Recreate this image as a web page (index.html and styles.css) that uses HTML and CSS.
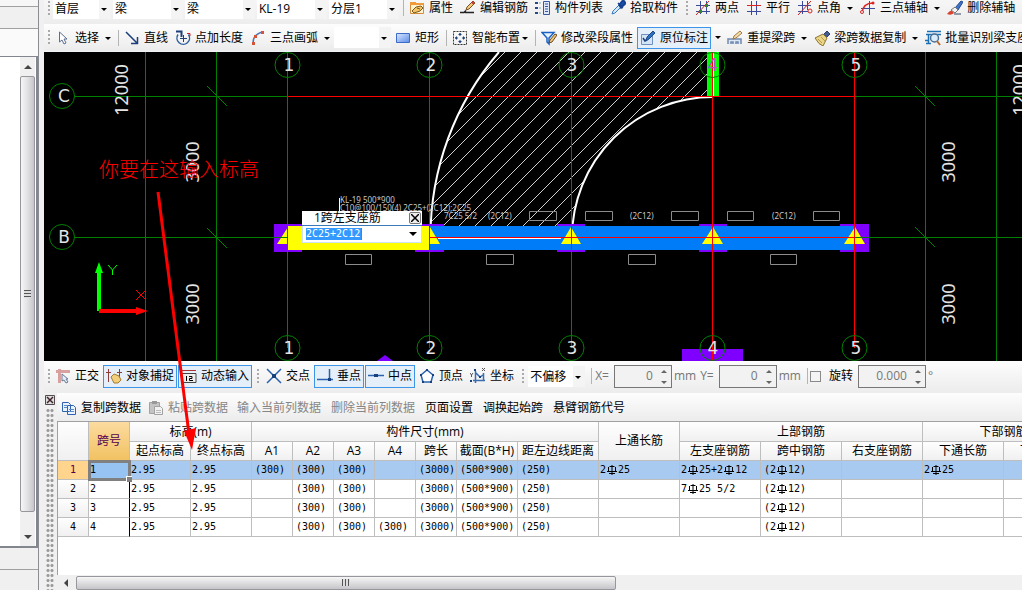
FILE: index.html
```html
<!DOCTYPE html>
<html lang="zh-CN">
<head>
    <meta charset="UTF-8">
    <meta name="viewport" content="width=device-width, initial-scale=1.0">
    <title>梁原位标注</title>
    <link rel="stylesheet" href="styles.css">
</head>
<body>

    <svg class="defs" width="0" height="0">
        <symbol id="rebar" viewBox="0 0 12 10">
            <path d="M3.500 1.500h5M3.500 6.500h5M2.500 2v4M9.500 2v4M6 0v10M1 6.500h10M3 8.500h6" fill="none" stroke="#000"/>
        </symbol>
    </svg>

    <div class="app">

        <aside class="sidebar">
            <div class="side-strip"></div>
            <div class="side-tab"></div>
            <div class="side-search"></div>
            <div class="side-tree">
                <div class="vscroll">
                    <span class="arrow-up"></span>
                    <div class="vthumb"><i class="grip-v"></i></div>
                    <span class="arrow-down"></span>
                </div>
            </div>
            <div class="side-tab"></div>
            <div class="side-rest"></div>
        </aside>

        <main class="main">

            <div class="toolbar toolbar-top">
                <span class="handle"></span>
                <div class="combos">
                    <label class="combo combo-first"><select aria-label="楼层"><option>首层</option></select></label>
                    <label class="combo"><select aria-label="构件类型"><option>梁</option></select></label>
                    <label class="combo"><select aria-label="构件"><option>梁</option></select></label>
                    <label class="combo"><select aria-label="构件名称"><option>KL-19</option></select></label>
                    <label class="combo"><select aria-label="分层"><option>分层1</option></select></label>
                </div>
                <span class="sep"></span>
                <button class="tool">
                    <svg class="icon" viewBox="0 0 16 16"><path d="M1.500 2.500h5l1 1h7v10h-13z" fill="#fff3cf" stroke="#d58b3c"/><path d="M1 2h6v3H1zM7 3h8v2H7z" fill="#f09a3a"/><path d="M3 11l4-4 5-1 2 2-3 3-3 1-3 1z" fill="#f3c463" stroke="#7a5a22"/><path d="M8 8l3 1" stroke="#7a5a22"/></svg>
                    属性
                </button>
                <button class="tool">
                    <svg class="icon" viewBox="0 0 16 16"><path d="M0 12.500h4l2-2M5 12.500h9" fill="none" stroke="#222" stroke-width="1.500"/><path d="M6 10l1-3 6-6 2 2-6 6z" fill="#f2c879" stroke="#7b5427"/><path d="M12 2l2 2" stroke="#c33" stroke-width="2"/></svg>
                    编辑钢筋
                </button>
                <button class="tool">
                    <svg class="icon" viewBox="0 0 16 16"><path d="M0 3h3M0 8h3M0 13h3" stroke="#234a8c" stroke-width="2"/><path d="M4 3h2M4 8h2M4 13h2" stroke="#8aa" /><path d="M8.500 1.500h6v13h-6z" fill="#dfe9fa" stroke="#345a9c"/><path d="M10 4h3M10 6.500h3M10 9h3M10 11.500h3" stroke="#345a9c"/></svg>
                    构件列表
                </button>
                <button class="tool">
                    <svg class="icon" viewBox="0 0 16 16"><path d="M2 14l1-3 6-6 2 2-6 6z" fill="#cfe8fb" stroke="#3b7cc0"/><path d="M8 3l5 5M9 5l3-4q2-1 3 1t-1 3l-3 3z" fill="#1a4cab" stroke="#173f8c" stroke-width="1.500"/></svg>
                    拾取构件
                </button>
                <span class="handle handle-mid"></span>
                <button class="tool">
                    <svg class="icon" viewBox="0 0 16 16"><path d="M5.500 1v13M11.500 1v13M1 5.500h14M1 11.500h14" stroke="#3b4a9c"/><path d="M1 15L14 1" stroke="#c22"/><path d="M4 10h3v3H4zM10 4h3v3h-3z" fill="#2a8a2a"/></svg>
                    两点
                </button>
                <button class="tool">
                    <svg class="icon" viewBox="0 0 16 16"><path d="M5.500 1v14M10.500 1v14M1 11.500h14" stroke="#3b4a9c" fill="none"/><path d="M1 5.500h14" stroke="#d22"/></svg>
                    平行
                </button>
                <button class="tool tool-drop">
                    <svg class="icon" viewBox="0 0 16 16"><path d="M5.500 1v13M10.500 1v9M1 5.500h13M1 11.500h10" stroke="#3b4a9c"/><path d="M1 15L14 1" stroke="#c22"/><circle cx="13" cy="11" r="2" fill="none" stroke="#d22"/></svg>
                    点角<i class="caret"></i>
                </button>
                <button class="tool tool-drop">
                    <svg class="icon" viewBox="0 0 16 16"><path d="M9.500 1v14M1 8.500h14" stroke="#3b4a9c"/><path d="M2 13q1-10 11-10" fill="none" stroke="#d22" stroke-width="1.500"/><circle cx="13" cy="3" r="1.500" fill="#d22"/><circle cx="2" cy="12" r="1.500" fill="#fff" stroke="#d22"/></svg>
                    三点辅轴<i class="caret"></i>
                </button>
                <button class="tool">
                    <svg class="icon" viewBox="0 0 16 16"><path d="M8 8l6-7 2 1-5 8z" fill="#3f74c8" stroke="#234a8c"/><path d="M4 10l4-3 3 3-3 3z" fill="#f4f4f4" stroke="#777"/><path d="M0 14q3-4 5-3l2 2q-3 3-7 1z" fill="#d9442f"/><path d="M7 14h7" stroke="#346"/></svg>
                    删除辅轴
                </button>
            </div>

            <div class="toolbar toolbar-draw">
                <span class="handle"></span>
                <button class="tool tool-drop">
                    <svg class="icon" viewBox="0 0 16 16"><path d="M4.500 2v10l2.500-2 2 4 2-1-2-4h3z" fill="#fff" stroke="#5b6f8f"/></svg>
                    选择<i class="caret"></i>
                </button>
                <span class="sep"></span>
                <button class="tool">
                    <svg class="icon" viewBox="0 0 16 16"><path d="M2 2l11 11M13.500 7v6.500H7" fill="none" stroke="#1d3f7c" stroke-width="1.500"/></svg>
                    直线
                </button>
                <button class="tool">
                    <svg class="icon" viewBox="0 0 16 16"><path d="M3 4.500a6.300 6.300 0 1 0 10.500 0" fill="none" stroke="#2e5f9e" stroke-width="1.500"/><path d="M1 1.500h5.500V7" fill="none" stroke="#1d3f7c" stroke-width="2"/><path d="M8.500 5v7M5 8.500h7" stroke="#1d3f7c"/><path d="M12 3.500h3V6" stroke="#d22" fill="none"/></svg>
                    点加长度
                </button>
                <button class="tool tool-drop">
                    <svg class="icon" viewBox="0 0 16 16"><path d="M3 13Q3 4 13 2" fill="none" stroke="#5475b5" stroke-width="1.500"/><path d="M2 12h3v3H2zM4 5h3v3H4zM11 1h3v3h-3z" fill="#d2553a"/></svg>
                    三点画弧<i class="caret"></i>
                </button>
                <label class="combo combo-wide"><select aria-label="画弧方式"><option></option></select></label>
                <button class="tool">
                    <svg class="icon" viewBox="0 0 16 16"><defs><linearGradient id="rc" x2="1" y2="1"><stop stop-color="#dce8ff"/><stop offset="1" stop-color="#5b8cea"/></linearGradient></defs><path d="M1.500 3.500h13v9h-13z" fill="url(#rc)" stroke="#3c6cc8"/></svg>
                    矩形
                </button>
                <span class="sep"></span>
                <button class="tool tool-drop tight">
                    <svg class="icon" viewBox="0 0 16 16"><path d="M1.500 1.500h13v13h-13z" fill="none" stroke="#333" stroke-dasharray="2 1"/><path d="M8 3v3M8 10v3M3 8h3M10 8h3" stroke="#1d3f7c"/><path d="M6 5l2-2 2 2zM6 11l2 2 2-2zM5 6L3 8l2 2zM11 6l2 2-2 2z" fill="#1d3f7c"/></svg>
                    智能布置<i class="caret"></i>
                </button>
                <span class="sep"></span>
                <button class="tool">
                    <svg class="icon" viewBox="0 0 16 16"><path d="M1 2.500h12L8 8v6l-2-2V8z" fill="#e4f2ff" stroke="#1b62c4" stroke-width="1.500"/><path d="M8 13l1-3 5-6 2 1-5 7z" fill="#f2c879" stroke="#6b4a22"/></svg>
                    修改梁段属性
                </button>
                <button class="tool active">
                    <svg class="icon" viewBox="0 0 16 16"><path d="M1.500 4.500h11v10h-11z" fill="#d5e5f8" stroke="#6f8fbd"/><path d="M3 8l2 3 2-2" fill="none" stroke="#1d3f7c" stroke-width="1.500"/><path d="M6 11l1-4 6-6 2 2-6 6z" fill="#2f6fc0" stroke="#1c4a88"/></svg>
                    原位标注
                </button>
                <span class="split"><i class="caret"></i></span>
                <button class="tool tool-drop">
                    <svg class="icon" viewBox="0 0 16 16"><path d="M1 14V9h13v5M4 14v-2h2v2M9 14v-2h2v2" fill="#dce6f5" stroke="#7189ad" stroke-width="1.500"/><path d="M6 9l1-3 6-5 2 2-6 5z" fill="#f4dca8" stroke="#a37a42"/></svg>
                    重提梁跨<i class="caret"></i>
                </button>
                <button class="tool tool-drop">
                    <svg class="icon" viewBox="0 0 16 16"><path d="M9 5l4-4 3 3-4 4z" fill="#445a90" stroke="#2d3f6c"/><path d="M1 8l8-4 4 4-4 8q-4-1-8-8z" fill="#ead588" stroke="#8d7430"/><path d="M4 9l4 4M7 7l4 4" stroke="#b79b4c"/></svg>
                    梁跨数据复制<i class="caret"></i>
                </button>
                <button class="tool">
                    <svg class="icon" viewBox="0 0 16 16"><path d="M2 1.500h14M1 4.500h15M0 10.500h4M1 13.500h5M3.500 4v9" stroke="#1b6fb5" stroke-width="1.500"/><circle cx="9.500" cy="8" r="4" fill="#d8ecfc" stroke="#4b6f94" stroke-width="1.500"/><path d="M12 11l3 4" stroke="#c0662f" stroke-width="2"/></svg>
                    批量识别梁支座
                </button>
            </div>

            <div class="canvas">
                <svg class="drawing">
                    <defs>
                        <pattern id="hatch" x="13" y="0" width="16" height="16" patternUnits="userSpaceOnUse">
                            <path d="M-1 17L17 -1" stroke="#d0d0d0" stroke-width="1"/>
                        </pattern>
                    </defs>
                    <g transform="translate(-44 -52)">
                        <!-- slab -->
                        <path d="M430 226V237A283 283 0 0 1 499 52H712V97A141 141 0 0 0 572 226Z" fill="url(#hatch)"/>
                        <path d="M430.500 237A283 283 0 0 1 499 52M572 237A141 141 0 0 1 713 97" class="arc"/>

                        <!-- axis grid -->
                        <path d="M145.500 52V361M216.500 52V361M925.500 52V361M996.500 52V361M75 96.500H288M855 96.500H1900M75 237.500H288M869 237.500H1900" class="axis"/>
                        <path d="M207 86l20 20M207 228l20 20M915 86l20 20M915 227l20 20" class="axis"/>

                        <!-- supports and beam -->
                        <path d="M274 224h28v28h-28zM415 224h29v28h-29zM557 224h28v28h-28zM699 224h28v28h-28zM840 224h29v28h-29zM682 349h61v12h-61zM377 361l8-6 8 6z" fill="#7f00ff"/>
                        <path d="M430 226h425v24H430z" fill="#007cf8"/>
                        <path d="M288 226h142v24H288z" fill="#ff0"/>
                        <path d="M288 227v17h-11zM430 227l10 17h-10zM571 227l10 17h-20zM713 227l10 17h-21zM855 227l10 17h-21z" fill="#ff0"/>
                        <path d="M438 238.500H561" stroke="#fff"/>
                        <path d="M869 237.500h-14M274 237.500h14" class="axis"/>

                        <!-- column at axis 4 -->
                        <path d="M707 52h12v44h-12z" fill="#0f0"/>
                        <path d="M713.500 52v44" stroke="#fff"/>

                        <path d="M288 96.500H855M430 237.500H855M287.500 52V348M429.500 52V348M571.500 52V348M712.500 52V361M854.500 52V348" class="picked"/>

                        <!-- annotation boxes -->
                        <g class="boxes">
                            <path d="M345.500 254.500h26v10h-26zM486.500 254.500h27v10h-27zM628.500 254.500h27v10h-27zM770.500 254.500h26v10h-26z"/>
                            <path d="M529.500 211.500h27v9h-27zM585.500 211.500h27v9h-27zM671.500 211.500h27v9h-27zM727.500 211.500h26v9h-26zM813.500 211.500h26v9h-26z"/>
                        </g>
                        <g class="note">
                            <text x="340" y="203">KL-19 500*900</text>
                            <text x="340" y="211">C10@100/150(4) 2C25+(2C12);2C25</text>
                            <text x="444" y="219">7C25 5/2</text>
                            <text x="488" y="219">(2C12)</text>
                            <text x="630" y="219">(2C12)</text>
                            <text x="772" y="219">(2C12)</text>
                        </g>
                        <path d="M339.500 198v13" stroke="#fff"/>

                        <!-- axis bubbles -->
                        <g class="bubble">
                            <circle cx="62" cy="96" r="12.500"/><circle cx="62" cy="237" r="12.500"/>
                            <circle cx="287.500" cy="65" r="12.500"/><circle cx="429.500" cy="65" r="12.500"/><circle cx="571.500" cy="65" r="12.500"/><circle cx="712.500" cy="65" r="12.500"/><circle cx="854.500" cy="65" r="12.500"/>
                            <circle cx="287.500" cy="348" r="12.500"/><circle cx="429.500" cy="348" r="12.500"/><circle cx="571.500" cy="348" r="12.500"/><circle cx="712.500" cy="348" r="12.500"/><circle cx="854.500" cy="348" r="12.500"/>
                        </g>
                        <g class="axis-name">
                            <text x="64" y="102">C</text><text x="64" y="243">B</text>
                            <text x="289" y="71">1</text><text x="431" y="71">2</text><text x="572" y="71">3</text><text x="713" y="71" fill="#c050c0">4</text><text x="856" y="71">5</text>
                            <text x="289" y="354">1</text><text x="431" y="354">2</text><text x="572" y="354">3</text><text x="713" y="354">4</text><text x="856" y="354">5</text>
                        </g>

                        <!-- dimensions -->
                        <g class="dim">
                            <text transform="translate(128 90) rotate(-90)">12000</text>
                            <text transform="translate(199 162) rotate(-90)">3000</text>
                            <text transform="translate(199 304) rotate(-90)">3000</text>
                            <text transform="translate(955 162) rotate(-90)">3000</text>
                            <text transform="translate(955 304) rotate(-90)">3000</text>
                            <text transform="translate(1026 90) rotate(-90)">12000</text>
                        </g>

                        <!-- ucs -->
                        <path d="M97 311V273h-2l4-11 4 11h-2v38z" fill="#0f0"/>
                        <path d="M99 309h37v-2l12 4-12 4v-2H99z" fill="#f00"/>
                        <path d="M108 265l4.500 5 4.500-5M112.500 270v5" fill="none" stroke="#0f0"/>
                        <path d="M136 290l10 10M146 290l-10 10" stroke="#f00"/>
                    </g>
                </svg>

                <div class="popup">
                    <div class="popup-title">
                        <label for="rebar-input">1跨左支座筋</label>
                        <button class="popup-close" aria-label="关闭"><svg viewBox="0 0 8 8"><path d="M0 0l8 8M8 0L0 8" stroke="#000" stroke-width="1.500"/></svg></button>
                    </div>
                    <div class="popup-field">
                        <input id="rebar-input" type="text" value="2C25+2C12">
                        <i class="caret"></i>
                    </div>
                </div>
            </div>

            <div class="toolbar toolbar-snap">
                <span class="handle"></span>
                <button class="tool">
                    <svg class="icon" viewBox="0 0 16 16"><path d="M1 3.500h14M4.500 1v14" stroke="#d9a0a0" stroke-width="3"/><path d="M7 6v7l2-1 2 3 2-1-2-3h2z" fill="#e8eef6" stroke="#667a96"/></svg>
                    正交
                </button>
                <button class="tool active">
                    <svg class="icon" viewBox="0 0 16 16"><path d="M2.500 1v13M13.500 1v13M0 4.500h5M11 4.500h5" stroke="#8d3b3b"/><path d="M5 9l3-3 5 2 2 4-3 3H8z" fill="#f1cf7d" stroke="#a57a2c"/></svg>
                    对象捕捉
                </button>
                <button class="tool active">
                    <svg class="icon" viewBox="0 0 16 16"><path d="M1 2.500h14" stroke="#a33"/><path d="M1 5.500h14v9H1" fill="#eee" stroke="#444"/><path d="M5.500 8v5M8 8.500h3v2H8.500v2H12" fill="none" stroke="#000"/></svg>
                    动态输入
                </button>
                <span class="handle handle-snap"></span>
                <button class="tool">
                    <svg class="icon" viewBox="0 0 16 16"><path d="M1 1l14 14M15 1L1 15" stroke="#2c62ad" stroke-width="1.500"/><path d="M6 6h4v4H6z" fill="#16407e"/></svg>
                    交点
                </button>
                <button class="tool active">
                    <svg class="icon" viewBox="0 0 16 16"><path d="M0 11.500h16M12.500 1v10" stroke="#2c62ad" stroke-width="1.500"/><path d="M11 10h3v3h-3z" fill="#16407e"/></svg>
                    垂点
                </button>
                <button class="tool active">
                    <svg class="icon" viewBox="0 0 16 16"><path d="M0 7.500h16" stroke="#2c62ad" stroke-width="1.500"/><path d="M6 6h4v3H6z" fill="#16407e"/></svg>
                    中点
                </button>
                <button class="tool">
                    <svg class="icon" viewBox="0 0 16 16"><path d="M8 2l6 5-2 7H4L2 7z" fill="#fff" stroke="#2c62ad" stroke-width="1.500"/><path d="M7 1h2v2H7zM1 6h2v2H1zM13 6h2v2h-2zM3 13h2v2H3zM11 13h2v2h-2z" fill="#16407e"/></svg>
                    顶点
                </button>
                <button class="tool">
                    <svg class="icon" viewBox="0 0 16 16"><path d="M5.500 3v12M3 12.500h12M6 5l4 4 3-2M13.500 5v8" fill="none" stroke="#3b6cae" stroke-width="1.500"/><path d="M0 5l1.500 2L3 5M1.500 7v2M12 0l3 3M15 0l-3 3" fill="none" stroke="#555"/><path d="M4 1h2v2H4zM0 12h2v2H0zM9 8h2v2H9z" fill="#16407e"/></svg>
                    坐标
                </button>
                <span class="handle handle-snap"></span>
                <label class="combo combo-wide"><select aria-label="偏移方式"><option>不偏移</option></select></label>
                <span class="sep sep-wide"></span>
                <label class="unit" for="off-x">X=</label>
                <span class="spin"><input id="off-x" type="text" value="0" disabled><span class="spin-arrows"><i></i><i></i></span></span>
                <span class="unit">mm</span>
                <label class="unit" for="off-y">Y=</label>
                <span class="spin"><input id="off-y" type="text" value="0" disabled><span class="spin-arrows"><i></i><i></i></span></span>
                <span class="unit">mm</span>
                <span class="sep"></span>
                <label class="check"><input type="checkbox">旋转</label>
                <span class="spin spin-wide"><input type="text" value="0.000" aria-label="旋转角度" disabled><span class="spin-arrows"><i></i><i></i></span></span>
                <span class="unit">°</span>
            </div>

            <section class="dock">
                <div class="dock-grip">
                    <button class="dock-close" aria-label="关闭"><svg viewBox="0 0 10 10"><path d="M.5 .5h9v9h-9z" fill="#ddd" stroke="#534a50"/><path d="M2 2l6 6M8 2L2 8" stroke="#40242c" stroke-width="1.500"/></svg></button>
                    <div class="dots"></div>
                </div>
                <div class="dock-body">
                    <div class="toolbar toolbar-data">
                        <button class="tool">
                            <svg class="icon" viewBox="0 0 16 16"><path d="M1.500 2.500h6l2 2v7h-8zM6.500 5.500h6l2 2v7h-8z" fill="#eaf2fd" stroke="#2f62b0"/><path d="M3 5.500h3M3 7.500h3M8 9.500h5M8 11.500h5" stroke="#5d8ccf"/></svg>
                            复制跨数据
                        </button>
                        <button class="tool" disabled>
                            <svg class="icon" viewBox="0 0 16 16"><path d="M1.500 2.500h10v11h-10z" fill="#c4c4c4" stroke="#a2a2a2"/><path d="M4 1h5v3H4z" fill="#999"/><path d="M6.500 6.500h6l2 2v6h-8z" fill="#f2f2f2" stroke="#a2a2a2"/><path d="M8 10.500h5M8 12.500h5" stroke="#bbb"/></svg>
                            粘贴跨数据
                        </button>
                        <button class="tool plain" disabled>输入当前列数据</button>
                        <button class="tool plain" disabled>删除当前列数据</button>
                        <button class="tool plain">页面设置</button>
                        <button class="tool plain">调换起始跨</button>
                        <button class="tool plain">悬臂钢筋代号</button>
                    </div>

                    <div class="grid-wrap">
                        <table class="grid">
                            <colgroup>
                                <col class="w-no"><col class="w-s"><col class="w-m"><col class="w-m">
                                <col class="w-s"><col class="w-s"><col class="w-s"><col class="w-s"><col class="w-s">
                                <col class="w-m"><col class="w-l"><col class="w-l"><col class="w-l"><col class="w-l"><col class="w-l"><col class="w-l"><col class="w-l">
                            </colgroup>
                            <thead>
                                <tr>
                                    <th rowspan="2"></th>
                                    <th rowspan="2" class="current">跨号</th>
                                    <th colspan="2">标高(m)</th>
                                    <th colspan="7">构件尺寸(mm)</th>
                                    <th rowspan="2">上通长筋</th>
                                    <th colspan="3">上部钢筋</th>
                                    <th colspan="2">下部钢筋</th>
                                </tr>
                                <tr>
                                    <th>起点标高</th><th>终点标高</th>
                                    <th>A1</th><th>A2</th><th>A3</th><th>A4</th><th>跨长</th><th>截面(B*H)</th><th>距左边线距离</th>
                                    <th>左支座钢筋</th><th>跨中钢筋</th><th>右支座钢筋</th>
                                    <th>下通长筋</th><th>下部钢筋</th>
                                </tr>
                            </thead>
                            <tbody>
                                <tr class="selected">
                                    <th>1</th><td class="cell-active">1</td><td>2.95</td><td>2.95</td>
                                    <td class="auto">(300)</td><td class="auto">(300)</td><td class="auto">(300)</td><td></td><td class="auto">(3000)</td><td class="auto">(500*900)</td><td class="auto">(250)</td>
                                    <td>2<svg class="rebar"><use href="#rebar"/></svg>25</td>
                                    <td>2<svg class="rebar"><use href="#rebar"/></svg>25+2<svg class="rebar"><use href="#rebar"/></svg>12</td>
                                    <td class="auto">(2<svg class="rebar"><use href="#rebar"/></svg>12)</td><td></td>
                                    <td>2<svg class="rebar"><use href="#rebar"/></svg>25</td><td></td>
                                </tr>
                                <tr>
                                    <th>2</th><td class="span-no">2</td><td>2.95</td><td>2.95</td>
                                    <td></td><td class="auto">(300)</td><td class="auto">(300)</td><td></td><td class="auto">(3000)</td><td class="auto">(500*900)</td><td class="auto">(250)</td>
                                    <td></td>
                                    <td>7<svg class="rebar"><use href="#rebar"/></svg>25 5/2</td>
                                    <td class="auto">(2<svg class="rebar"><use href="#rebar"/></svg>12)</td><td></td><td></td><td></td>
                                </tr>
                                <tr>
                                    <th>3</th><td class="span-no">3</td><td>2.95</td><td>2.95</td>
                                    <td></td><td class="auto">(300)</td><td class="auto">(300)</td><td></td><td class="auto">(3000)</td><td class="auto">(500*900)</td><td class="auto">(250)</td>
                                    <td></td><td></td>
                                    <td class="auto">(2<svg class="rebar"><use href="#rebar"/></svg>12)</td><td></td><td></td><td></td>
                                </tr>
                                <tr>
                                    <th>4</th><td class="span-no">4</td><td>2.95</td><td>2.95</td>
                                    <td></td><td class="auto">(300)</td><td class="auto">(300)</td><td class="auto">(300)</td><td class="auto">(3000)</td><td class="auto">(500*900)</td><td class="auto">(250)</td>
                                    <td></td><td></td>
                                    <td class="auto">(2<svg class="rebar"><use href="#rebar"/></svg>12)</td><td></td><td></td><td></td>
                                </tr>
                            </tbody>
                        </table>
                    </div>

                    <div class="hscroll">
                        <span class="arrow-left"></span>
                        <div class="hthumb"><i class="grip-h"></i></div>
                    </div>
                </div>
            </section>

        </main>

        <!-- hint arrow pointing at the elevation columns -->
        <p class="hint">你要在这输入标高</p>
        <svg class="hint-arrow" viewBox="0 0 50 264">
            <path d="M8 2L39 244" stroke="#f00" stroke-width="3"/>
            <path d="M42 260L34 241l12-3z" fill="#f00"/>
        </svg>
    </div>

</body>
</html>
```
FILE: styles.css
```css
* {
    box-sizing: border-box;
}
body {
    margin: 0;
    background: #f0f0f0;
    color: #000;
    font-family: "Open Sans", "Noto Sans CJK SC", sans-serif;
    font-size: 12px;
    line-height: 16px;
    overflow: hidden;
}
button, input, select {
    font: inherit;
    color: inherit;
    margin: 0;
    padding: 0;
    border: 0;
    background: none;
}
.defs {
    position: absolute;
}
.app {
    position: relative;
    display: flex;
    height: 100vh;
}

/* left panel */
.sidebar {
    flex: none;
    width: 39px;
    display: flex;
    flex-direction: column;
    border-right: 1px solid #8c8c94;
    margin-right: 5px;
}
.side-strip {
    height: 7px;
    background: #f6f6f6;
    border-bottom: 1px solid #a0a0a0;
}
.side-tab {
    height: 22px;
    border-bottom: 1px solid #a0a0a0;
}
.side-search {
    height: 27px;
    background: #fafafa;
}
.side-tree {
    flex: 1;
    display: flex;
    justify-content: flex-end;
    background: #fff;
    border: solid #82878f;
    border-width: 1px 2px 2px 0;
    padding-right: 1px;
}
.side-rest {
    height: 20px;
}
.vscroll {
    width: 15px;
    display: flex;
    flex-direction: column;
    align-items: center;
    background: #f0f0f0;
    padding-bottom: 3px;
}
.arrow-up, .arrow-down, .arrow-left {
    width: 0;
    height: 0;
    border: 4px solid transparent;
}
.arrow-up {
    border-bottom-color: #444;
    margin: 4px 0 7px;
}
.arrow-down {
    border-top-color: #444;
    margin-top: 23px;
}
.arrow-left {
    border-right-color: #444;
    margin: 0 8px 0 3px;
}
.vthumb {
    flex: 1;
    width: 100%;
    display: flex;
    align-items: center;
    justify-content: center;
    border: 1px solid #96969c;
    border-radius: 2px;
    background: linear-gradient(90deg, #f6f6f6, #e4e4e6 45%, #c6c6ca);
}
.grip-v {
    width: 7px;
    height: 8px;
    background: repeating-linear-gradient(#555 0 1px, #ddd 1px 3px);
}
.grip-h {
    width: 8px;
    height: 7px;
    background: repeating-linear-gradient(90deg, #555 0 1px, #ddd 1px 3px);
}

/* toolbars */
.main {
    flex: 1;
    min-width: 0;
    display: flex;
    flex-direction: column;
}
.toolbar {
    flex: none;
    display: flex;
    align-items: center;
    gap: 1px;
    overflow: hidden;
    white-space: nowrap;
    background: linear-gradient(#fdfdfd, #ececec);
}
.toolbar > * {
    flex: none;
}
.toolbar-top {
    height: 24px;
    padding-bottom: 8px;
    background: linear-gradient(#f6f6f6, #ededed);
}
.toolbar-draw {
    height: 28px;
    border-bottom: 1px solid #eef3f6;
}
.toolbar-snap {
    height: 32px;
    padding-bottom: 2px;
}
.toolbar-data {
    height: 28px;
    padding: 1px 0 0 1px;
}
.handle {
    width: 7px;
    height: 15px;
    background: repeating-linear-gradient(#aaa 0 2px, transparent 2px 4px) 4px 0 / 2px 15px no-repeat;
}
.handle-mid {
    width: 9px;
}
.handle-snap {
    width: 9px;
}
.sep {
    width: 5px;
    height: 16px;
    background: linear-gradient(#b4b4b4, #b4b4b4) 3px 0 / 1px 16px no-repeat;
}
.sep-wide {
    margin-left: 2px;
}
.tool {
    height: 23px;
    display: flex;
    align-items: center;
    padding: 0 3px;
    white-space: nowrap;
}
.tool:disabled {
    color: #868686;
}
.tool.active {
    background: #e4effa;
    outline: 1px solid #3c95e8;
    outline-offset: -1px;
    height: 22px;
}
.toolbar-snap .active {
    height: 23px;
}
.plain {
    padding: 0 4px 0 5px;
}
.icon {
    flex: none;
    width: 16px;
    height: 16px;
    margin-right: 4px;
}
.caret {
    flex: none;
    border: 3px solid transparent;
    border-top-color: #000;
    border-bottom: 0;
}
.tool-drop .caret {
    margin: 1px 0 0 6px;
}
.tight .caret {
    margin-left: 2px;
}
.split {
    width: 11px;
    display: flex;
    justify-content: center;
}
.combos {
    display: flex;
    gap: 2px;
    margin-left: 1px;
}
.combo {
    position: relative;
    width: 70px;
    height: 21px;
    background: #fff;
}
.combo select {
    width: 100%;
    height: 100%;
    padding-left: 2px;
    appearance: none;
    line-height: 19px;
}
.combo::after {
    content: "";
    position: absolute;
    top: 10px;
    right: 4px;
    border: 3px solid transparent;
    border-top-color: #000;
    border-bottom: 0;
    pointer-events: none;
}
.combo::before {
    content: "";
    position: absolute;
    inset: 0 0 0 auto;
    width: 12px;
    background: #f4f4f4;
    pointer-events: none;
}
.combo-first {
    width: 58px;
}
.combo-wide {
    width: 57px;
}
.unit {
    color: #777;
    margin-left: 1px;
    margin-right: 2px;
}
label.unit {
    margin-right: 4px;
}
.spin {
    display: flex;
    width: 58px;
    height: 23px;
    border: 1px solid #777;
    background: #f2f2f2;
    color: #777;
}
.spin input {
    flex: 1;
    min-width: 0;
    text-align: right;
}
.spin-arrows {
    width: 18px;
    display: flex;
    flex-direction: column;
    align-items: center;
    justify-content: space-between;
    padding: 4px 0 3px 4px;
}
.spin-arrows i {
    border: 3px solid transparent;
    border-top-color: #666;
    border-bottom: 0;
}
.spin-arrows i:first-child {
    transform: rotate(180deg);
}
.spin-wide {
    width: 68px;
    margin-left: 4px;
}
.check {
    display: flex;
    align-items: center;
}
.check input {
    appearance: none;
    width: 11px;
    height: 11px;
    margin-right: 8px;
    border: 1px solid #8a8a8a;
    background: #f4f4f4;
}

/* drawing area */
.canvas {
    position: relative;
    flex: none;
    background: #000;
}
.drawing {
    display: block;
    width: 100%;
    height: 309px;
}
.axis {
    fill: none;
    stroke: #008000;
}
.picked {
    fill: none;
    stroke: #f00;
}
.arc {
    fill: none;
    stroke: #fff;
    stroke-width: 2;
}
.boxes {
    fill: none;
    stroke: #8c8c8c;
}
.note {
    fill: #c8c8c8;
    font-family: "Noto Sans", sans-serif;
    font-size: 8px;
}
.bubble {
    fill: none;
    stroke: #008000;
}
.axis-name {
    fill: #e4e4e4;
    font-family: "DejaVu Sans", sans-serif;
    font-size: 17px;
    text-anchor: middle;
}
.dim {
    fill: #e4e4e4;
    font-family: "Noto Sans", sans-serif;
    font-size: 18px;
    text-anchor: middle;
}
.popup {
    position: absolute;
    left: 258px;
    top: 159px;
    width: 120px;
    background: #fff;
}
.popup-title {
    display: flex;
    align-items: center;
    justify-content: space-between;
    height: 15px;
    padding: 0 1px 0 12px;
    border-bottom: 1px solid #3a7ab8;
}
.popup-close {
    display: flex;
    width: 12px;
    height: 12px;
    padding: 1px;
    border: 1px solid #777;
    border-radius: 2px;
    background: #eee;
}
.popup-close svg {
    width: 8px;
    height: 8px;
}
.popup-field {
    display: flex;
    align-items: center;
    justify-content: space-between;
    height: 17px;
    padding: 0 4px 0 3px;
    border: 1px solid #cde3f5;
    border-top: 0;
}
.popup-field input {
    width: 56px;
    height: 12px;
    font-family: "DejaVu Sans Mono", monospace;
    font-size: 10px;
    line-height: 12px;
    color: #fff;
    background: #3399ff;
    border-right: 1px solid #cc6600;
}
.popup-field .caret {
    border-width: 4px 4px 0;
}

/* data dock */
.dock {
    flex: 1;
    min-height: 0;
    display: flex;
}
.dock-grip {
    width: 13px;
    display: flex;
    flex-direction: column;
    padding: 2px 1px 0;
}
.dock-close {
    display: flex;
    width: 10px;
    height: 10px;
}
.dots {
    flex: 1;
    margin: 3px 0 0 1px;
    width: 8px;
    background: radial-gradient(circle, #999 1px, transparent 2px) 0 0 / 4px 5px;
}
.dock-body {
    flex: 1;
    min-width: 0;
    display: flex;
    flex-direction: column;
}
.grid-wrap {
    flex: 1;
    overflow: hidden;
    background: #fff;
    border: solid #a0a0a0;
    border-width: 1px 0 0 1px;
}
.grid {
    width: 1027px;
    table-layout: fixed;
    border-collapse: separate;
    border-spacing: 0;
}
.w-no { width: 31px; }
.w-s { width: 41px; }
.w-m { width: 61px; }
.w-l { width: 81px; }
.grid th, .grid td {
    height: 19px;
    padding: 0;
    border: solid #bebebe;
    border-width: 0 1px 1px 0;
    white-space: nowrap;
    line-height: 16px;
}
.grid th {
    font-weight: normal;
    text-align: center;
    background: linear-gradient(#fefefe, #f0f0f0);
}
.grid thead tr:first-child th {
    height: 20px;
}
.grid tbody th, .grid td {
    font-family: "DejaVu Sans Mono", monospace;
    font-size: 10px;
}
.grid td {
    padding-left: 1px;
    background: #fff;
}
.grid .auto {
    padding-left: 3px;
}
.grid .current {
    background: linear-gradient(#fcdba0, #f1c262);
    color: #560050;
}
.grid .selected td {
    background: #a8caf0;
}
.grid .selected th {
    background: #ffd48d;
    color: #560050;
}
.grid .selected .cell-active {
    position: relative;
    background: #97c3f3;
    outline: 3px solid #808080;
    outline-offset: -2px;
}
.cell-active::after {
    content: "";
    position: absolute;
    right: -3px;
    bottom: -3px;
    width: 5px;
    height: 5px;
    background: #808080;
    border: solid #fff;
    border-width: 1px 0 0 1px;
}
.grid .span-no {
    border-right-color: #000;
}
.rebar {
    width: 12px;
    height: 10px;
    vertical-align: -2px;
}
.hscroll {
    flex: none;
    height: 15px;
    display: flex;
    align-items: center;
    background: #f0f0f0;
}
.hthumb {
    width: 56%;
    height: 14px;
    display: flex;
    align-items: center;
    justify-content: center;
    border: 1px solid #96969c;
    border-radius: 2px;
    background: linear-gradient(#f6f6f6, #e0e0e2 45%, #c6c6ca);
}

/* hint laid over the window */
.hint {
    position: absolute;
    left: 99px;
    top: 158px;
    margin: 0;
    color: #f00;
    font-size: 20px;
    font-weight: 300;
    line-height: 24px;
}
.hint-arrow {
    position: absolute;
    left: 150px;
    top: 190px;
    width: 50px;
    height: 264px;
    pointer-events: none;
}
```
